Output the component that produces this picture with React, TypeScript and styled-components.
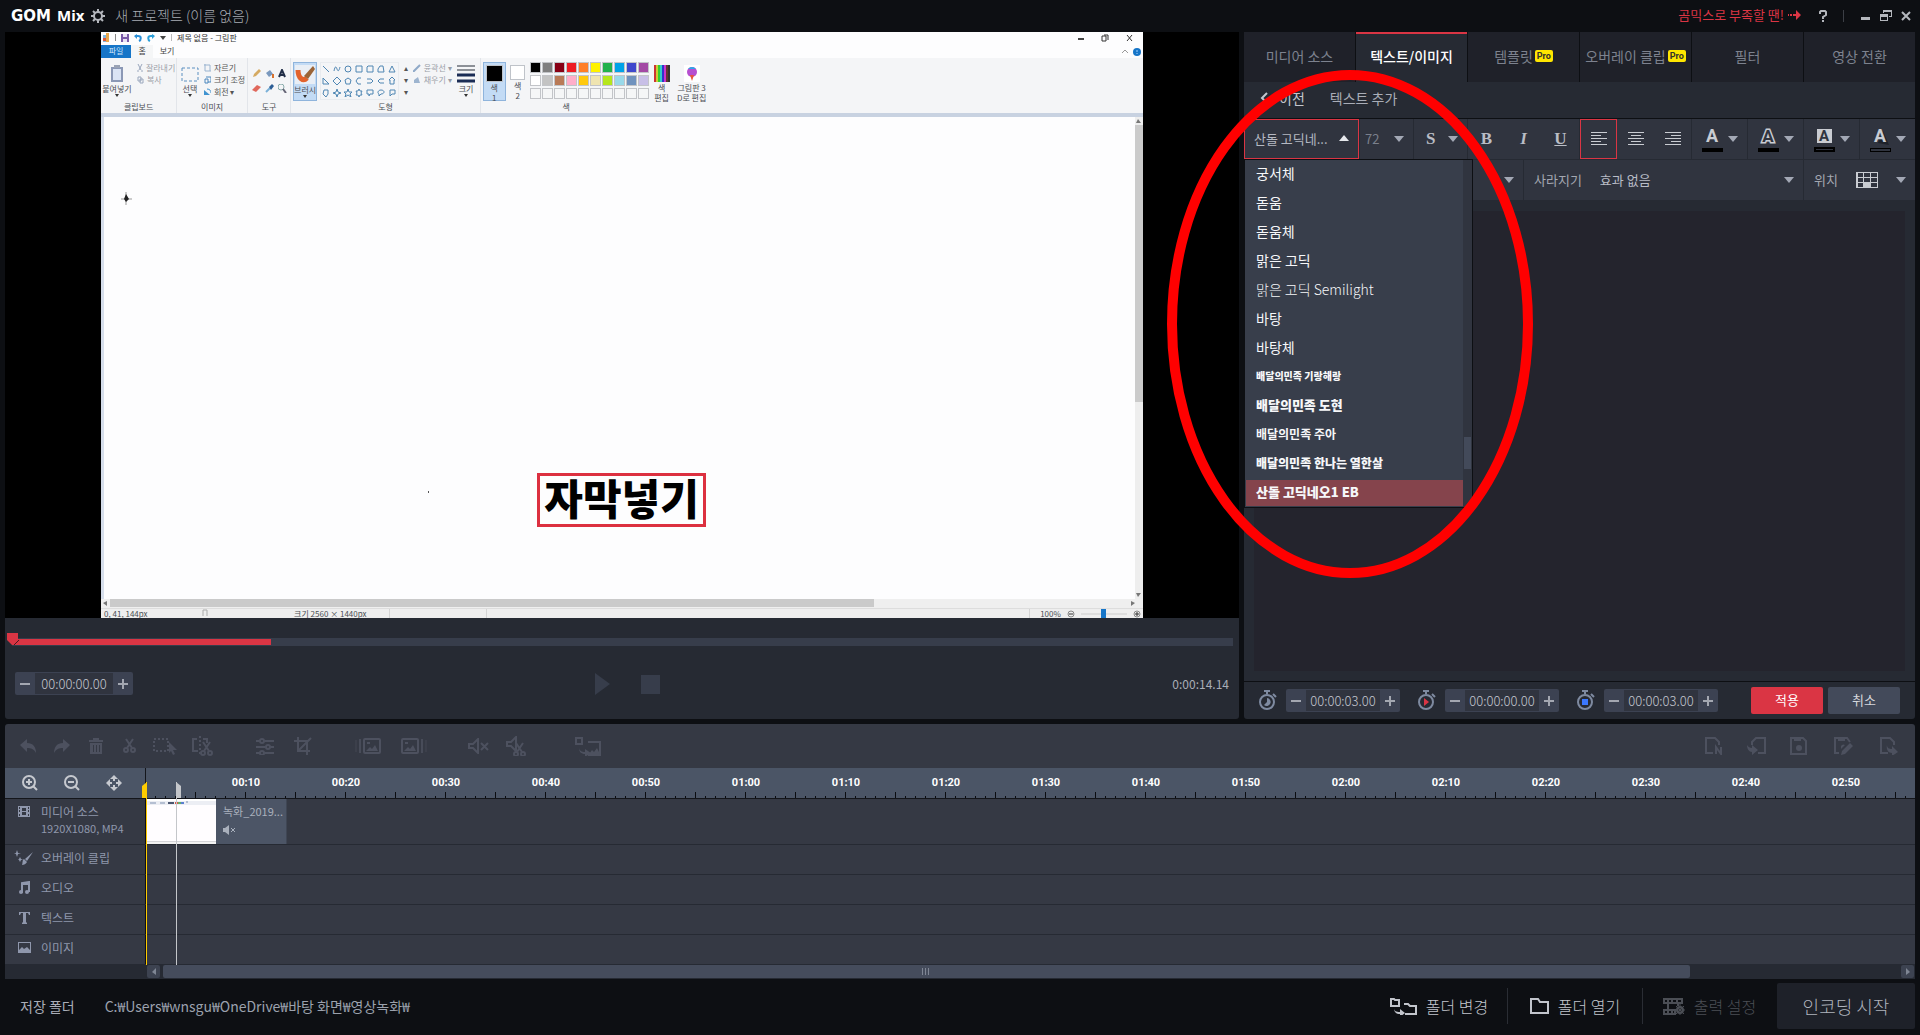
import React from "react";
import styled, { createGlobalStyle } from "styled-components";

const c = {
  base: "#0d0f13",
  panel: "#262a33",
  cell: "#30343f",
  raised: "#3c4252",
  track: "#373d4b",
  red: "#da3544",
  text: "#b9bdc7",
  dim: "#7d828e",
  lane: "#353944",
  ruler: "#4b5566",
  label: "#8f97ac",
};

const Global = createGlobalStyle`
  *, *::before, *::after { box-sizing: border-box; }
  body { margin: 0; background: ${c.base}; }
  body, button, input, select, textarea {
    font-family: "Noto Sans CJK KR", "Noto Sans", sans-serif;
  }
  button { border: 0; padding: 0; background: none; color: inherit; cursor: pointer; }
  svg { display: block; flex: none; }
`;

/* ---------- shared ---------- */

const Ico = ({ w, h, children }: { w: number; h: number; children: React.ReactNode }) => (
  <svg width={w} height={h} viewBox={`0 0 ${w} ${h}`} fill="none" stroke="none" aria-hidden="true">
    {children}
  </svg>
);

const Caret = ({ up }: { up?: boolean }) => (
  <Ico w={10} h={6}>
    <path d={up ? "M0 6L5 0l5 6z" : "M0 0h10L5 6z"} fill={up ? "#e6e8ec" : "#a3a8b5"} />
  </Ico>
);

const Page = styled.div`
  min-height: 100vh;
  display: flex;
  flex-direction: column;
  color: ${c.text};
  background: ${c.base};
`;

/* ---------- title bar ---------- */

const TitleBar = styled.header`
  height: 32px;
  flex: none;
  display: flex;
  align-items: center;
  padding: 0 9px 2px 11px;
`;
const Logo = styled.div`
  display: flex;
  align-items: baseline;
  gap: 6px;
  color: #fff;
  font: 700 15px/20px "DejaVu Sans", sans-serif;
`;
const LogoSub = styled.span`
  font: 700 15px/20px "Noto Sans", sans-serif;
`;
const TitleBtn = styled.button`
  color: #b4b7bd;
  padding-top: 2px;
`;
const ProjectName = styled.h1`
  margin: 0 auto 0 10px;
  font-size: 14px;
  line-height: 20px;
  font-weight: 300;
  color: #a9adb5;
`;
const GearBtn = styled(TitleBtn)`
  margin-left: 7px;
`;
const Promo = styled.a`
  display: flex;
  align-items: center;
  gap: 4px;
  margin-right: 18px;
  font-size: 13px;
  line-height: 20px;
  color: ${c.red};
  text-decoration: none;
`;
const WindowBtns = styled.div`
  display: flex;
  align-items: center;
  gap: 9px;
  margin-left: 17px;
`;
const BarRule = styled.span`
  width: 1px;
  height: 12px;
  margin: 2px 0 0 16px;
  background: #3c3f46;
`;

/* ---------- main ---------- */

const Main = styled.main`
  flex: 1;
  min-height: 0;
  display: grid;
  grid-template-columns: minmax(0, 1234fr) minmax(0, 671fr);
  gap: 5px;
  padding: 0 5px;
`;
const Player = styled.section`
  display: flex;
  flex-direction: column;
  background: ${c.panel};
  border-radius: 0 0 3px 3px;
`;
const Stage = styled.div`
  flex: 1;
  min-height: 0;
  display: flex;
  justify-content: center;
  background: #000;
`;

/* ---------- the recorded frame ---------- */

const Frame = styled.div`
  height: 100%;
  aspect-ratio: 16 / 9;
  display: flex;
  flex-direction: column;
  overflow: hidden;
  position: relative;
  background: #fdfdfe;
  color: #4b4e54;
  font-size: 8px;
  line-height: 12px;
`;
const FTitle = styled.div`
  height: 13px;
  display: flex;
  align-items: center;
  gap: 5px;
  padding: 0 10px 2px 1px;
  color: #333;
`;
const FSpace = styled.span`
  flex: 1;
`;
const FWin = styled.div`
  display: flex;
  align-items: center;
  gap: 17px;
`;
const FTabs = styled.div`
  height: 13px;
  display: flex;
  align-items: center;
  padding-right: 2px;
`;
const FTab = styled.span<{ $kind?: "file" | "on" }>`
  width: ${(p) => (p.$kind === "file" ? 30 : p.$kind === "on" ? 22 : 28)}px;
  height: 13px;
  text-align: center;
  background: ${(p) => (p.$kind === "file" ? "#1675c8" : p.$kind === "on" ? "#f5f6f7" : "none")};
  color: ${(p) => (p.$kind === "file" ? "#cfe5fa" : "#444")};
`;
const Ribbon = styled.div`
  height: 59px;
  flex: none;
  display: flex;
  background: #f4f5f7;
  border-bottom: 4px solid #c8d2e1;
`;
const RGroup = styled.div<{ $w: number; $rule?: boolean }>`
  width: ${(p) => p.$w}px;
  height: 55px;
  display: flex;
  flex-direction: column;
  align-items: center;
  border-right: 1px solid ${(p) => (p.$rule ? "#e2e5ea" : "transparent")};
  white-space: nowrap;
`;
const RBody = styled.div<{ $gap?: number }>`
  flex: 1;
  display: flex;
  gap: ${(p) => p.$gap ?? 8}px;
  padding-top: 4px;
`;
const RBig = styled.div<{ $on?: boolean; $w?: number }>`
  width: ${(p) => p.$w ?? 24}px;
  height: 39px;
  padding-top: 2px;
  display: flex;
  flex-direction: column;
  align-items: center;
  line-height: 9px;
  gap: 1px;
  background: ${(p) => (p.$on ? "#c3dbf5" : "none")};
  border: 1px solid ${(p) => (p.$on ? "#8fb4dc" : "transparent")};
`;
const RStack = styled.div<{ $faint?: boolean }>`
  display: flex;
  flex-direction: column;
  color: ${(p) => (p.$faint ? "#9a9ea7" : "#555")};
`;
const RLine = styled.span`
  display: flex;
  align-items: center;
  gap: 3px;
  height: 12px;
`;
const Tools = styled.div`
  display: grid;
  grid-template-columns: repeat(3, 13px);
  grid-auto-rows: 15px;
  place-items: center;
  padding-top: 4px;
`;
const Shapes = styled.div`
  display: grid;
  grid-template-columns: repeat(7, 11px);
  grid-auto-rows: 12px;
  place-items: center;
  border: 1px solid #e8ebef;
  height: 38px;
`;
const Palette = styled.div`
  display: grid;
  grid-template-columns: repeat(10, 12px);
  grid-auto-rows: 13px;
`;
const Swatch = styled.i<{ $c: string }>`
  width: 11px;
  height: 11px;
  background: ${(p) => p.$c};
  border: 1px solid #c2c4c8;
`;
const Chip = styled.i<{ $c: string; $s: number }>`
  flex: none;
  width: ${(p) => p.$s}px;
  height: ${(p) => p.$s}px;
  background: ${(p) => p.$c};
  border: 1px solid #bfc3c9;
`;
const FCanvas = styled.div`
  flex: 1;
  display: flex;
  border-left: 3px solid #d6deeb;
`;
const FPaper = styled.div`
  flex: 1;
`;
const FScrollV = styled.div`
  width: 8px;
  display: flex;
  flex-direction: column;
  align-items: center;
  gap: 2px;
  background: #eee;
  padding: 2px 0;
`;
const FThumbV = styled.div`
  width: 8px;
  height: 58%;
  margin-bottom: auto;
  background: #cbcbcb;
`;
const FScrollH = styled.div`
  height: 9px;
  display: flex;
  align-items: center;
  gap: 3px;
  background: #efefef;
  padding: 0 8px 1px 2px;
`;
const FThumbH = styled.div`
  width: 74%;
  height: 8px;
  margin-right: auto;
  background: #cacaca;
`;
const FStatus = styled.div`
  height: 10px;
  flex: none;
  display: flex;
  align-items: center;
  background: #eee;
  border-top: 1px solid #ddd;
  line-height: 9px;
  padding-left: 3px;
`;
const FCell = styled.span<{ $w: number; $rule?: boolean }>`
  width: ${(p) => p.$w}px;
  border-right: 1px solid ${(p) => (p.$rule ? "#d4d4d4" : "transparent")};
  height: 9px;
  white-space: nowrap;
`;
const Zoom = styled.span`
  display: flex;
  align-items: center;
  gap: 6px;
  padding: 0 2px 0 10px;
  border-left: 1px solid #d4d4d4;
`;
const Pointer = styled.div`
  position: absolute;
  left: 20px;
  top: 160px;
`;
const Speck = styled.i`
  position: absolute;
  left: 327px;
  top: 459px;
  width: 1px;
  height: 2px;
  background: #555;
`;
const Caption = styled.div`
  position: absolute;
  left: 436px;
  bottom: 91px;
  width: 169px;
  height: 54px;
  border: 3px solid #dc3040;
  color: #000;
  font-size: 42px;
  line-height: 42px;
  font-weight: 900;
  text-align: center;
  white-space: nowrap;
`;

const shapeIcons = [
  "M1 1l6 6", "M1 6c1-5 2-5 3-2s2 2 3-2", "M4 1a3 3 0 100 6 3 3 0 100-6", "M1 1h6v6H1z", "M2 1h4v0h1v6H1V2z", "M1 7V4l2-3h3l1 6z", "M4 1l3 6H1z",
  "M1 1l6 6H1z", "M4 0l4 4-4 4-4-4z", "M4 1l3 2-1 4H2L1 3z", "M6 1H3L1 4l2 3h3", "M1 2h4l2 2-2 2H1", "M7 2H3L1 4l2 2h4", "M4 0l3 3H6v4H2V3H1z",
  "M2 1h4v4L4 8 1 5z", "M4 0l1 3 3 1-3 1-1 3-1-3-3-1 3-1z", "M4 0l1 3h3L6 5l1 3-3-2-3 2 1-3-2-2h3z", "M4 0l1 2h2L6 4l1 2H5L4 8 3 6H1l1-2-1-2h2z", "M1 1h6v4H4L3 7V5H1z", "M4 1c4 0 4 4 0 4L2 7V5C0 4 1 1 4 1z", "M2 1h5v4H4L2 7z",
];
const swatches = [
  "#000", "#7f7f7f", "#880015", "#ed1c24", "#ff7f27", "#fff200", "#22b14c", "#00a2e8", "#3f48cc", "#a349a4",
  "#fff", "#c3c3c3", "#b97a57", "#ffaec9", "#ffc90e", "#efe4b0", "#b5e61d", "#99d9ea", "#7092be", "#c8bfe7",
  ...Array(10).fill("#f5f6f7"),
];

const RecordedFrame = () => (
  <Frame>
    <FTitle>
      <Ico w={8} h={10}>
        <path d="M1 2h4v7H1z" fill="#7fb6e0" />
        <path d="M4 0h3v9H4z" fill="#e8a94e" />
        <path d="M1 5h3v3H1z" fill="#d9583c" />
      </Ico>
      <Ico w={1} h={7}><path d="M0 0h1v7H0z" fill="#888" /></Ico>
      <Ico w={8} h={8}><path d="M0 0h8v8H0z" fill="#7a5ba8" /><path d="M2 0h4v3H2zM2 5h4v3H2z" fill="#e9e2f4" /></Ico>
      <Ico w={8} h={8}><path d="M1 2h3c4 0 3 4 1 5" stroke="#2b8fd8" strokeWidth="2" /><path d="M3 0v5L0 2z" fill="#2b8fd8" /></Ico>
      <Ico w={8} h={8}><path d="M7 2H4C0 2 1 6 3 7" stroke="#2b9fd8" strokeWidth="2" /><path d="M5 0v5l3-3z" fill="#2b9fd8" /></Ico>
      <Ico w={6} h={4}><path d="M0 0h6L3 4z" fill="#444" /></Ico>
      <Ico w={1} h={7}><path d="M0 0h1v7H0z" fill="#bbb" /></Ico>
      제목 없음 - 그림판
      <FSpace />
      <FWin>
        <Ico w={6} h={8}><path d="M0 4h6v2H0z" fill="#444" /></Ico>
        <Ico w={8} h={8}><path d="M1 2h4v5H1zM3 1h4v5" stroke="#333" /></Ico>
        <Ico w={7} h={8}><path d="M1 1l5 6M6 1L1 7" stroke="#333" /></Ico>
      </FWin>
    </FTitle>
    <FTabs>
      <FTab $kind="file">파일</FTab>
      <FTab $kind="on">홈</FTab>
      <FTab>보기</FTab>
      <FSpace />
      <Ico w={12} h={8}><path d="M1 5l3-3 3 3" stroke="#999" /></Ico>
      <Ico w={8} h={8}><circle cx="4" cy="4" r="4" fill="#1675c8" /><path d="M4 2v2M4 5v1" stroke="#9fd0ff" /></Ico>
    </FTabs>
    <Ribbon>
      <RGroup $w={76} $rule>
        <RBody $gap={5}>
          <RBig $w={30}>
            <Ico w={14} h={18}><path d="M1 2h12v15H1z" fill="#8b98b5" /><path d="M3 4h8v11H3z" fill="#dbe4f4" /><path d="M4 0h6v3H4z" fill="#9aa3b5" /></Ico>
            붙여넣기<Ico w={4} h={3}><path d="M0 0h4L2 3z" fill="#333" /></Ico>
          </RBig>
          <RStack $faint>
            <RLine><Ico w={6} h={8}><path d="M1 0l3 6M5 0L2 6M0 7h2M4 7h2" stroke="#9aa7bd" /></Ico>잘라내기</RLine>
            <RLine><Ico w={7} h={8}><path d="M1 1h3v4H1zM3 3h3v4H3z" stroke="#9aa7bd" /></Ico>복사</RLine>
          </RStack>
        </RBody>
        클립보드
      </RGroup>
      <RGroup $w={71} $rule>
        <RBody $gap={3}>
          <RBig $w={22}>
            <Ico w={18} h={18}><path d="M1 3h16v13H1z" stroke="#5b8fc0" strokeDasharray="3 2" /></Ico>
            선택<Ico w={4} h={3}><path d="M0 0h4L2 3z" fill="#333" /></Ico>
          </RBig>
          <RStack>
            <RLine><Ico w={7} h={8}><path d="M1 0v7h6M0 1h6v6" stroke="#9ab4d0" /></Ico>자르기</RLine>
            <RLine><Ico w={7} h={8}><path d="M1 3h3v4H1zM2 1h5v5H4" stroke="#4a86bd" /></Ico>크기 조정</RLine>
            <RLine><Ico w={7} h={8}><path d="M0 7l6 0-6-5z" fill="#3f93d0" /><path d="M3 1c3 0 4 2 4 4" stroke="#3f93d0" /></Ico>회전 ▾</RLine>
          </RStack>
        </RBody>
        이미지
      </RGroup>
      <RGroup $w={43} $rule>
        <RBody>
          <Tools>
            <Ico w={9} h={9}><path d="M1 8l1-3 5-5 2 2-5 5z" fill="#d5aa62" /></Ico>
            <Ico w={9} h={9}><path d="M1 4l4-3 3 4-4 3z" fill="#7a98bd" /><path d="M7 5h2v4H7z" fill="#d8722f" /></Ico>
            <Ico w={8} h={9}><path d="M1 8l3-7 3 7M2 6h4" stroke="#222f48" strokeWidth="2" /></Ico>
            <Ico w={9} h={9}><path d="M0 6l5-5 4 2-5 5z" fill="#e0685c" /></Ico>
            <Ico w={9} h={9}><path d="M1 8l4-4" stroke="#7ab0d8" strokeWidth="2" /><path d="M4 3l3-3 2 2-3 4z" fill="#2b5d95" /></Ico>
            <Ico w={9} h={9}><circle cx="3" cy="3" r="3" stroke="#8aa" /><path d="M5 5l3 4" stroke="#667" strokeWidth="2" /></Ico>
          </Tools>
        </RBody>
        도구
      </RGroup>
      <RGroup $w={29}>
        <RBody>
          <RBig $on>
            <Ico w={22} h={19}><path d="M1 0h20v19H1z" fill="#e9eef5" /><path d="M4 5c0 8 5 12 9 8" stroke="#e2622c" strokeWidth="5" /><path d="M10 11l9-10 2 3-7 10z" fill="#9b6437" /></Ico>
            브러시<Ico w={4} h={3}><path d="M0 0h4L2 3z" fill="#333" /></Ico>
          </RBig>
        </RBody>
      </RGroup>
      <RGroup $w={132}>
        <RBody $gap={5}>
          <Shapes>
            {shapeIcons.map((d) => <Ico key={d} w={8} h={8}><path d={d} stroke="#4f86b3" /></Ico>)}
          </Shapes>
          <RStack><RLine>▴</RLine><RLine>▾</RLine><RLine>▾</RLine></RStack>
          <RStack $faint>
            <RLine><Ico w={8} h={8}><path d="M0 8l7-7" stroke="#8fa9c8" strokeWidth="2" /></Ico>윤곽선 ▾</RLine>
            <RLine><Ico w={8} h={8}><path d="M1 4l4-3 2 6H1z" fill="#9db4cf" /></Ico>채우기 ▾</RLine>
          </RStack>
        </RBody>
        도형
      </RGroup>
      <RGroup $w={29} $rule>
        <RBody>
          <RBig>
            <Ico w={18} h={18}><path d="M0 1h18M0 5h18" stroke="#8c9097" strokeWidth="2" /><path d="M0 10h18M0 16h18" stroke="#1a2c55" strokeWidth="3" /></Ico>
            크기<Ico w={4} h={3}><path d="M0 0h4L2 3z" fill="#333" /></Ico>
          </RBig>
        </RBody>
      </RGroup>
      <RGroup $w={171}>
        <RBody $gap={2}>
          <RBig $on $w={23}><Chip $c="#000" $s={17} />색<span>1</span></RBig>
          <RBig $w={20}><Chip $c="#fff" $s={15} />색<span>2</span></RBig>
          <Palette>{swatches.map((s, i) => <Swatch key={i} $c={s} />)}</Palette>
        </RBody>
        색
      </RGroup>
      <RGroup $w={56}>
        <RBody $gap={8}>
          <RBig $w={16}>
            <Ico w={16} h={17}>
              {["#c33", "#cc3", "#3c3", "#3cc", "#33c", "#c3c", "#633", "#333"].map((fill, i) => <path key={fill} d={`M${i * 2} 0h2v17h-2z`} fill={fill} />)}
            </Ico>
            색<span>편집</span>
          </RBig>
          <RBig $w={28}>
            <Ico w={16} h={17}><path d="M0 0h16v17H0z" fill="#fff" /><circle cx="8" cy="7" r="5" fill="#b64fd0" /><path d="M4 4a5 5 0 018 0z" fill="#2ba8e8" /><path d="M6 10h4l-2 6z" fill="#e8553c" /></Ico>
            그림판 3<span>D로 편집</span>
          </RBig>
        </RBody>
      </RGroup>
    </Ribbon>
    <FCanvas>
      <FPaper />
      <FScrollV>
        <Ico w={5} h={4}><path d="M0 4l2-4 3 4z" fill="#777" /></Ico>
        <FThumbV />
        <Ico w={5} h={4}><path d="M0 0h5L2 4z" fill="#777" /></Ico>
      </FScrollV>
    </FCanvas>
    <FScrollH>
      <Ico w={4} h={5}><path d="M4 0L0 2l4 3z" fill="#777" /></Ico>
      <FThumbH />
      <Ico w={4} h={5}><path d="M0 0l4 2-4 3z" fill="#777" /></Ico>
    </FScrollH>
    <FStatus>
      <FCell $w={98}>0, 41, 144px</FCell>
      <FCell $w={92}><Ico w={6} h={7}><path d="M1 7V1h4v6" stroke="#aaa" /></Ico></FCell>
      <FCell $w={96} $rule>크기 2560 × 1440px</FCell>
      <FCell $w={97} $rule />
      <FSpace />
      <Zoom>
        100%
        <Ico w={8} h={8}><circle cx="4" cy="4" r="3" stroke="#888" /><path d="M2 4h4" stroke="#333" /></Ico>
        <Ico w={46} h={9}><path d="M0 4h46v2H0z" fill="#ddd" /><path d="M20 0h5v9h-5z" fill="#1675c8" /></Ico>
        <Ico w={8} h={8}><circle cx="4" cy="4" r="3" stroke="#888" /><path d="M2 4h4M4 2v4" stroke="#333" /></Ico>
      </Zoom>
    </FStatus>
    <Pointer>
      <Ico w={11} h={13}><path d="M0 7h11M5 0v13" stroke="#999" /><path d="M5 2l3 5-3 3-2-3z" fill="#222" /></Ico>
    </Pointer>
    <Speck />
    <Caption>자막넣기</Caption>
  </Frame>
);

/* ---------- player controls ---------- */

const Controls = styled.div`
  height: 101px;
  flex: none;
  padding: 15px 6px 0 2px;
`;
const Seek = styled.div`
  display: flex;
  align-items: flex-end;
  height: 13px;
`;
const SeekTrack = styled.div`
  flex: 1;
  height: 8px;
  margin-left: -8px;
  background: ${c.track};
  padding: 1px 0;
`;
const SeekFill = styled.div`
  width: 21.2%;
  height: 6px;
  background: ${c.red};
`;
const SeekHead = styled.span`
  height: 13px;
  z-index: 1;
`;
const Transport = styled.div`
  display: grid;
  grid-template-columns: 1fr auto 1fr;
  align-items: center;
  margin-top: 26px;
  padding: 0 4px 0 8px;
`;
const PlayBtns = styled.div`
  display: flex;
  gap: 31px;
`;
const Total = styled.output`
  justify-self: end;
  font-size: 12px;
  line-height: 16px;
  color: #a9adb7;
`;

const Spin = styled.div<{ $wide?: boolean }>`
  display: flex;
  width: ${(p) => (p.$wide ? 118 : 114)}px;
  height: 23px;
  padding: 1px 0;
  border-radius: 2px;
  background: ${c.raised};
`;
const SpinBtn = styled.button`
  width: 20px;
  flex: none;
  display: grid;
  place-items: center;
  color: #a3a7b1;
`;
const SpinInput = styled.input`
  flex: 1;
  min-width: 0;
  border: 0;
  padding: 0;
  background: ${c.cell};
  color: #c3c6ce;
  font-size: 13px;
  font-weight: 300;
  text-align: center;
`;
const TimeSpinner = ({ label, value, wide }: { label: string; value: string; wide?: boolean }) => (
  <Spin $wide={wide}>
    <SpinBtn aria-label={`${label} 감소`}><Ico w={10} h={10}><path d="M0 4h10v2H0z" fill="currentColor" /></Ico></SpinBtn>
    <SpinInput aria-label={label} defaultValue={value} />
    <SpinBtn aria-label={`${label} 증가`}><Ico w={10} h={10}><path d="M0 4h10v2H0zM4 0h2v10H4z" fill="currentColor" /></Ico></SpinBtn>
  </Spin>
);

/* ---------- editor panel ---------- */

const Editor = styled.section`
  position: relative;
  display: flex;
  flex-direction: column;
  background: ${c.panel};
  border-radius: 0 0 3px 3px;
`;
const Tabs = styled.nav`
  display: grid;
  grid-template-columns: repeat(6, 1fr);
  column-gap: 1px;
  height: 50px;
  background: ${c.base};
`;
const Tab = styled.button<{ $on?: boolean }>`
  display: flex;
  align-items: center;
  justify-content: center;
  gap: 2px;
  padding-bottom: 4px;
  font-size: 14px;
  white-space: nowrap;
  border-top: 2px solid ${(p) => (p.$on ? c.red : "#1f2129")};
  background: ${(p) => (p.$on ? c.panel : "#1f2129")};
  color: ${(p) => (p.$on ? "#fff" : c.dim)};
  font-weight: ${(p) => (p.$on ? 500 : 400)};
`;
const Pro = styled.span`
  padding: 0 2px;
  border-radius: 2px;
  background: #ffe600;
  color: #33322a;
  font: 700 9px/12px Roboto, sans-serif;
`;
const Crumbs = styled.div`
  display: flex;
  align-items: center;
  gap: 25px;
  height: 37px;
  padding: 0 16px 4px;
  border-bottom: 1px solid ${c.base};
  font-size: 14px;
  color: #a9adb7;
`;
const Back = styled.button`
  display: flex;
  align-items: center;
  gap: 11px;
  font-size: 14px;
  color: #c3c6ce;
`;
const ToolRow = styled.div<{ $cols: string }>`
  display: grid;
  grid-template-columns: ${(p) => p.$cols};
  column-gap: 1px;
  height: 41px;
  padding-bottom: 1px;
  font-size: 13px;
`;
const Cell = styled.div`
  display: flex;
  align-items: center;
  background: ${c.cell};
  min-width: 0;
`;
const Trio = styled(Cell)`
  display: grid;
  grid-template-columns: repeat(3, 1fr);
  align-items: stretch;
`;
const FontBtn = styled.button`
  display: flex;
  align-items: center;
  justify-content: space-between;
  padding: 0 9px 2px;
  border: 1px solid ${c.red};
  background: ${c.cell};
  font-size: 13px;
  color: #b5b9c2;
`;
const Pick = styled.select`
  appearance: none;
  flex: 1;
  min-width: 0;
  height: 40px;
  border: 0;
  padding: 0 0 2px 5px;
  background: none;
  color: ${c.text};
  font-size: 13px;
`;
const SizePick = styled(Pick)`
  color: #7b808c;
`;
const PickCell = styled(Cell)`
  padding-right: 9px;
`;
const PickLabel = styled.label`
  padding: 0 0 2px 10px;
  margin-right: 13px;
  color: #a3a7b1;
`;
const Glyph = styled.button<{ $on?: boolean; $italic?: boolean; $under?: boolean }>`
  display: grid;
  place-items: center;
  border: 1px solid ${(p) => (p.$on ? c.red : "transparent")};
  color: #babdc5;
  font: ${(p) => (p.$italic ? "italic" : "normal")} 700 17px/20px "Liberation Serif", serif;
  text-decoration: ${(p) => (p.$under ? "underline" : "none")};
`;
const Split = styled.button`
  width: 100%;
  height: 100%;
  display: flex;
  align-items: center;
  justify-content: space-between;
  padding: 0 9px 0 10px;
  background: ${c.cell};
`;
const StyleMark = styled.span`
  color: #babdc5;
  font: 700 17px/20px "Liberation Serif", serif;
  padding-left: 2px;
`;
const FxSplit = styled(Split)`
  justify-content: flex-end;
`;
const PosSplit = styled(Split)`
  font-size: 13px;
  color: #a3a7b1;
`;
const PosLabel = styled.span`
  padding-bottom: 2px;
`;
const Pad = styled.div`
  flex: 1;
  display: flex;
  padding: 10px;
`;
const TextBox = styled.textarea`
  flex: 1;
  resize: none;
  border: 0;
  background: #24242d;
  color: #fff;
`;
const Timing = styled.div`
  display: flex;
  align-items: center;
  gap: 17px;
  height: 38px;
  padding: 0 15px 0 14px;
  border-top: 1px solid ${c.base};
`;
const Timer = styled.div`
  display: flex;
  align-items: center;
  gap: 8px;
`;
const Actions = styled.div`
  display: flex;
  gap: 5px;
  margin-left: auto;
`;
const ActBtn = styled.button<{ $main?: boolean }>`
  width: 72px;
  height: 27px;
  padding-bottom: 2px;
  border-radius: 2px;
  background: ${(p) => (p.$main ? c.red : "#434a5a")};
  color: ${(p) => (p.$main ? "#fff" : "#d5d7dc")};
  font-size: 13px;
`;
const Menu = styled.div`
  position: absolute;
  top: 127px;
  left: 0;
  width: 229px;
  height: 349px;
  display: flex;
  border: 1px solid ${c.base};
  background: #383e4b;
  overflow: hidden;
`;
const Options = styled.ul`
  flex: 1;
  margin: 0;
  padding: 1px 0 0 1px;
  list-style: none;
  display: flex;
  flex-direction: column;
  gap: 3px;
`;
const Option = styled.li<{ $size: number; $weight: number; $on?: boolean }>`
  height: 26px;
  flex: none;
  padding-left: 10px;
  color: #f6f7f9;
  font-size: ${(p) => p.$size}px;
  line-height: 24px;
  font-weight: ${(p) => p.$weight};
  background: ${(p) => (p.$on ? "#85444c" : "none")};
`;
const MenuBar = styled.div`
  width: 9px;
  padding: 277px 1px 0;
  background: #30343f;
`;
const MenuThumb = styled.div`
  height: 32px;
  background: #434a5a;
`;
const Highlight = styled.div`
  position: absolute;
  left: -77px;
  top: 37px;
  pointer-events: none;
`;

const fonts: [string, number, number][] = [
  ["궁서체", 14, 400],
  ["돋움", 14, 400],
  ["돋움체", 14, 400],
  ["맑은 고딕", 14, 400],
  ["맑은 고딕 Semilight", 14, 300],
  ["바탕", 14, 400],
  ["바탕체", 14, 400],
  ["배달의민족 기랑해랑", 10, 900],
  ["배달의민족 도현", 13, 900],
  ["배달의민족 주아", 12, 700],
  ["배달의민족 한나는 열한살", 12, 900],
  ["산돌 고딕네오1 EB", 13, 900],
];

const AlignIcon = ({ short }: { short: number }) => (
  <Ico w={16} h={14}>
    {[0, 1, 2, 3, 4].map((i) => (
      <path key={i} d={i % 2 ? `M${short} ${i * 3}h10v1h-10z` : `M0 ${i * 3}h16v1H0z`} fill="#c9ccd2" />
    ))}
  </Ico>
);

const Stopwatch = ({ children }: { children: React.ReactNode }) => (
  <Ico w={20} h={21}>
    <path d="M6 1h6M9 1v3M15 4l3 3" stroke="#7e8aa0" strokeWidth="2" />
    <circle cx="9" cy="12" r="7" stroke="#7e8aa0" strokeWidth="2" />
    {children}
  </Ico>
);

const letter = { textAnchor: "middle", fontFamily: "Roboto", fontWeight: 700 } as const;
const colorMarks = [
  <Ico key="a" w={21} h={32}>
    <text {...letter} x="10" y="19" fontSize="18" fill="#c9ccd2">A</text>
    <path d="M0 25h21v4H0z" fill="#000" />
  </Ico>,
  <Ico key="b" w={21} h={32}>
    <text {...letter} x="10" y="19" fontSize="17" fill="#30343f" stroke="#c9ccd2" strokeWidth="3" paintOrder="stroke">A</text>
    <path d="M0 25h21v4H0z" fill="#000" />
  </Ico>,
  <Ico key="c" w={21} h={32}>
    <path d="M3 6h15v14H3z" fill="#c9ccd2" />
    <text {...letter} x="10" y="18" fontSize="15" fill="#30343f">A</text>
    <path d="M0 24h21v5H0zM2 26v1h17v-1z" fill="#000" fillRule="evenodd" />
  </Ico>,
  <Ico key="d" w={21} h={32}>
    <path d="M8 20l5-12 6 14z" fill="#1f222a" />
    <text {...letter} x="10" y="19" fontSize="18" fill="#c9ccd2">A</text>
    <path d="M0 25h21v4H0zM1 26v2h19v-2z" fill="#000" fillRule="evenodd" />
  </Ico>,
];

/* ---------- timeline ---------- */

const Timeline = styled.section`
  flex: none;
  margin: 5px 5px 0;
  border-radius: 3px 3px 0 0;
  overflow: hidden;
  background: ${c.lane};
`;
const EditBar = styled.div`
  display: flex;
  justify-content: space-between;
  height: 44px;
  padding: 0 4px 0 6px;
  color: #4d515f;
`;
const EditSide = styled.div`
  display: flex;
  gap: 24px;
`;
const EditGroup = styled.div`
  display: flex;
`;
const EditBtn = styled.button<{ $w: number }>`
  width: ${(p) => p.$w}px;
  display: grid;
  place-items: center;
`;
const Lanes = styled.div`
  position: relative;
`;
const RulerRow = styled.div`
  display: grid;
  grid-template-columns: 141px minmax(0, 1fr);
  height: 31px;
  background: ${c.ruler};
  border-bottom: 1px solid #14161b;
`;
const ZoomBtns = styled.div`
  display: flex;
  align-items: center;
  gap: 26px;
  padding-left: 17px;
  border-right: 1px solid #14161b;
  color: #c6c9cf;
`;
const Ruler = styled.div`
  display: flex;
  overflow: hidden;
  padding-left: 50px;
  background:
    repeating-linear-gradient(to right, transparent 0 9px, #0b0c10 9px 10px) left bottom / 100% 2px no-repeat,
    repeating-linear-gradient(to right, transparent 0 49px, #0b0c10 49px 50px) left bottom / 100% 6px no-repeat;
`;
const Mark = styled.span`
  flex: none;
  width: 100px;
  padding-top: 7px;
  text-align: center;
  color: #fff;
  font: 700 11px/16px Roboto, sans-serif;
`;
const Lane = styled.div<{ $tall?: boolean }>`
  display: grid;
  grid-template-columns: 141px minmax(0, 1fr);
  height: ${(p) => (p.$tall ? 46 : 30)}px;
  border-bottom: 1px solid ${c.panel};
`;
const LaneHead = styled.div`
  display: grid;
  grid-template-columns: 20px 1fr;
  column-gap: 7px;
  align-items: center;
  align-content: center;
  justify-items: center;
  padding: 0 0 4px 9px;
  border-right: 1px solid ${c.base};
  color: ${c.label};
  font-size: 12px;
  line-height: 16px;
`;
const LaneName = styled.span`
  justify-self: start;
`;
const LaneInfo = styled.span`
  grid-column: 2;
  justify-self: start;
  font-size: 11px;
`;
const Clip = styled.div`
  width: 141px;
  display: flex;
  background: #4c5566;
  border-right: 1px solid #3f4654;
`;
const Thumb = styled.div`
  width: 70px;
  background: linear-gradient(#fff 0 2px, #eceef4 2px 6px, #fffdff 6px 42px, #d5d5d8 42px 43px, #f2f2f2 43px);
`;
const ClipText = styled.div`
  display: flex;
  flex-direction: column;
  gap: 5px;
  padding: 3px 0 0 7px;
  color: #a9b0bc;
  font-size: 11px;
  line-height: 18px;
`;
const Marker = styled.div<{ $x: number; $color: string; $line: number }>`
  position: absolute;
  top: 14px;
  bottom: 14px;
  left: ${(p) => p.$x}px;
  color: ${(p) => p.$color};
  background: linear-gradient(${(p) => p.$color}, ${(p) => p.$color}) ${(p) => p.$line}px 0 / 1px 100% no-repeat;
`;
const HScroll = styled.div`
  display: flex;
  height: 14px;
  padding: 0 1px 1px 142px;
  background: ${c.panel};
`;
const HBtn = styled.button`
  width: 13px;
  display: grid;
  place-items: center;
  border-radius: 2px;
  background: #3d4351;
  color: #7f8694;
`;
const HTrack = styled.div`
  flex: 1;
  padding: 0 3px;
`;
const HThumb = styled.div`
  width: 88%;
  height: 13px;
  display: grid;
  place-items: center;
  border-radius: 2px;
  background: #454c5c;
`;

/* ---------- footer ---------- */

const Footer = styled.footer`
  flex: none;
  display: flex;
  align-items: center;
  height: 56px;
  padding: 0 5px 2px 20px;
  font-size: 14px;
  color: #a9adb7;
`;
const SavePath = styled.span`
  margin: 0 auto 0 30px;
  color: #9ba1ad;
`;
const FootBtn = styled.button<{ $w: number; $last?: boolean }>`
  width: ${(p) => p.$w}px;
  height: 36px;
  display: flex;
  align-items: center;
  justify-content: center;
  gap: 9px;
  font-size: 16px;
  font-weight: 300;
  color: #c2c5cc;
  border-right: 1px solid ${(p) => (p.$last ? "transparent" : "#2a2d34")};
  &:disabled { color: #4b4e55; }
`;
const Encode = styled.button`
  width: 138px;
  height: 46px;
  border-radius: 2px;
  background: #1e2129;
  color: #b0b4bd;
  font-size: 18px;
  font-weight: 300;
`;

const marks = Array.from({ length: 17 }, (_, i) => {
  const s = (i + 1) * 10;
  return `${String(Math.floor(s / 60)).padStart(2, "0")}:${String(s % 60).padStart(2, "0")}`;
});

const f = { fill: "currentColor" };
const s2 = { stroke: "currentColor", strokeWidth: 2 };

const Scissor = ({ x = 0, y = 0 }: { x?: number; y?: number }) => (
  <g transform={`translate(${x} ${y})`}>
    <path d="M2 0l6 9M9 0L3 9" {...s2} />
    <circle cx="2" cy="11" r="2" {...s2} />
    <circle cx="9" cy="11" r="2" {...s2} />
  </g>
);
const Speaker = () => <path d="M1 6h4l5-5v14l-5-5H1z" {...s2} />;
const Landscape = ({ x }: { x: number }) => (
  <g transform={`translate(${x} 0)`}>
    <rect x="1" y="1" width="16" height="14" rx="1" {...s2} />
    <path d="M3 13l4-4 2 2 3-4 3 6z" {...f} />
    <path d="M4 4h3v2H4z" {...f} />
  </g>
);
const DocPath = "M8 16H1V1h9l4 4v3";

const leftTools: [string, number, React.ReactNode][][] = [
  [
    ["실행 취소", 34, <Ico w={16} h={14}><path d="M0 6l7-6v4c6 0 9 4 9 10-2-4-5-5-9-5v4z" {...f} /></Ico>],
    ["다시 실행", 34, <Ico w={16} h={14}><path d="M16 6L9 0v4C3 4 0 8 0 14c2-4 5-5 9-5v4z" {...f} /></Ico>],
    ["삭제", 34, <Ico w={14} h={16}><path d="M0 2h4V0h6v2h4v2H0zM1 5h12v11H1zm3 2v7h1V7zm3 0v7h1V7zm3 0v7h1V7z" fillRule="evenodd" {...f} /></Ico>],
    ["자르기", 34, <Ico w={14} h={16}><Scissor x={1} y={1} /></Ico>],
    ["구간 선택", 36, <Ico w={24} h={18}><path d="M1 2h14v12H1z" {...s2} strokeDasharray="2 2" /><path d="M16 5l8 8h-4l2 4-2 1-2-4-2 2z" {...f} /></Ico>],
    ["구간 자르기", 38, <Ico w={21} h={20}><path d="M5 3H1v12h5M11 3h4v4" {...s2} /><path d="M8 0v18" {...s2} strokeDasharray="2 2" /><Scissor x={9} y={6} /></Ico>],
  ],
  [
    ["조정", 40, <Ico w={18} h={17}><path d="M0 3h18M0 9h18M0 15h18" {...s2} /><g {...s2} fill={c.lane}><circle cx="6" cy="3" r="2" /><circle cx="12" cy="9" r="2" /><circle cx="6" cy="15" r="2" /></g></Ico>],
    ["화면 자르기", 36, <Ico w={18} h={18}><path d="M4 0v14h12M0 4h13v14M4 14L17 1" {...s2} /></Ico>],
  ],
  [
    ["페이드 인", 46, <Ico w={26} h={16}><path d="M1 2v12" stroke="currentColor" opacity=".6" /><path d="M5 1v14" stroke="currentColor" strokeWidth="2" opacity=".8" /><Landscape x={8} /></Ico>],
    ["페이드 아웃", 46, <Ico w={26} h={16}><Landscape x={0} /><path d="M21 1v14" stroke="currentColor" strokeWidth="2" opacity=".8" /><path d="M25 2v12" stroke="currentColor" opacity=".6" /></Ico>],
  ],
  [
    ["음소거", 34, <Ico w={21} h={16}><Speaker /><path d="M13 5l7 7M20 5l-7 7" {...s2} /></Ico>],
    ["음성 분리", 42, <Ico w={20} h={20}><Speaker /><Scissor x={8} y={7} /></Ico>],
  ],
  [["클립 교체", 54, <Ico w={27} h={19}><path d="M1 1h6v6H1zM13 5h12v13H13" {...s2} /><path d="M4 10c0 4 3 5 6 5v-3l6 4-6 4v-3c-4 0-6-2-6-7zM14 17l3-4 2 2 3-4 3 6z" {...f} /></Ico>]],
];
const rightTools: [string, number, React.ReactNode][] = [
  ["새 프로젝트", 42, <Ico w={18} h={18}><path d={DocPath} {...s2} /><path d="M11 17v-7l5 7v-7" {...s2} /></Ico>],
  ["불러오기", 42, <Ico w={19} h={18}><path d="M5 8V5l4-4h9v15h-7" {...s2} /><path d="M0 8c1 2 3 3 5 3V8l6 5-6 5v-3c-3 0-5-3-5-7z" {...f} /></Ico>],
  ["저장", 44, <Ico w={18} h={18}><path d="M1 1h12l3 3v13H1z" {...s2} /><path d="M4 1h7v3H4z" {...f} /><circle cx="9" cy="11" r="3" {...f} /></Ico>],
  ["다른 이름으로 저장", 46, <Ico w={20} h={18}><path d="M16 5l-3-4H1v15h4" {...s2} /><path d="M4 1h7v3H4zM7 9a3 3 0 014-1l-4 4zM8 14l8-8 3 3-8 8-4 1z" {...f} /></Ico>],
  ["내보내기", 44, <Ico w={19} h={18}><path d={DocPath} {...s2} /><path d="M7 8c0 3 2 4 5 4V9l6 6-6 4v-3c-4 0-6-4-5-8z" {...f} /></Ico>],
];

const lanes: [string, React.ReactNode][] = [
  ["오버레이 클립", <Ico w={20} h={15}><path d="M3 0l1 3 3 1-3 0-1 3-1-3-2 0 2-1zM6 7l1 2 2 1-2 0-1 2-1-2-1 0 1-1zM19 2l-6 9-2-2zM10 9l3 3c-1 2-3 3-5 3 1-2 0-5 2-6z" {...f} /></Ico>],
  ["오디오", <Ico w={12} h={14}><path d="M4 12V2l7-1v10" {...s2} /><path d="M4 3h7" {...s2} /><circle cx="3" cy="11" r="2" {...f} /><circle cx="9" cy="11" r="2" {...f} /></Ico>],
  ["텍스트", <Ico w={11} h={12}><path d="M0 0h11v3h-1l-1-2H7v9l1 1v1H3v-1l1-1V1H2L1 3H0z" {...f} /></Ico>],
  ["이미지", <Ico w={13} h={11}><path d="M0 0h13v11H0zM1 1v7l3-3 2 2 3-2 3 3V1z" fillRule="evenodd" {...f} /></Ico>],
];

export default function App() {
  return (
    <Page>
      <Global />
      <TitleBar>
        <Logo>GOM<LogoSub>Mix</LogoSub></Logo>
        <GearBtn aria-label="환경 설정">
          <Ico w={14} h={14}>
            <path d="M7 0v14M0 7h14M2 2l10 10M12 2L2 12" stroke="currentColor" strokeWidth="2" />
            <circle cx="7" cy="7" r="4" fill={c.base} stroke="currentColor" strokeWidth="2" />
          </Ico>
        </GearBtn>
        <ProjectName>새 프로젝트 (이름 없음)</ProjectName>
        <Promo href="#">
          곰믹스로 부족할 땐!
          <Ico w={13} h={10}><path d="M0 4h1v2H0zM2 4h2v2H2zM5 4h3V0l5 5-5 5V6H5z" fill={c.red} /></Ico>
        </Promo>
        <TitleBtn aria-label="도움말">
          <Ico w={8} h={12}><path d="M1 4V2l1-1h4l1 1v3L4 7v2M4 10v2" stroke="currentColor" strokeWidth="2" /></Ico>
        </TitleBtn>
        <BarRule />
        <WindowBtns>
          <TitleBtn aria-label="최소화"><Ico w={10} h={12}><path d="M0 7h9v3H0z" fill="currentColor" /></Ico></TitleBtn>
          <TitleBtn aria-label="이전 크기로"><Ico w={12} h={12}><path d="M3 0h9v7H9V6h2V2H4v1H3zM0 4h8v7H0zm1 3v3h6V7z" fill="currentColor" fillRule="evenodd" /></Ico></TitleBtn>
          <TitleBtn aria-label="닫기"><Ico w={10} h={10}><path d="M1 1l8 8M9 1L1 9" stroke="currentColor" strokeWidth="2" /></Ico></TitleBtn>
        </WindowBtns>
      </TitleBar>

      <Main>
        <Player>
          <Stage><RecordedFrame /></Stage>
          <Controls>
            <Seek>
              <SeekHead><Ico w={13} h={13}><path d="M0 0h11v7l-4 5H5L0 7z" fill={c.red} /><path d="M12 7l-5 5" stroke="#4a1820" /></Ico></SeekHead>
              <SeekTrack><SeekFill /></SeekTrack>
            </Seek>
            <Transport>
              <TimeSpinner label="현재 위치" value="00:00:00.00" wide />
              <PlayBtns>
                <button aria-label="재생"><Ico w={26} h={22}><path d="M11 0l15 11-15 11z" fill={c.track} /></Ico></button>
                <button aria-label="정지"><Ico w={19} h={22}><path d="M0 2h19v19H0z" fill={c.track} /></Ico></button>
              </PlayBtns>
              <Total>0:00:14.14</Total>
            </Transport>
          </Controls>
        </Player>

        <Editor>
          <Tabs>
            <Tab>미디어 소스</Tab>
            <Tab $on>텍스트/이미지</Tab>
            <Tab>템플릿<Pro>Pro</Pro></Tab>
            <Tab>오버레이 클립<Pro>Pro</Pro></Tab>
            <Tab>필터</Tab>
            <Tab>영상 전환</Tab>
          </Tabs>
          <Crumbs>
            <Back><Ico w={8} h={12}><path d="M7 1L2 6l5 5" stroke="currentColor" strokeWidth="2" /></Ico>이전</Back>
            텍스트 추가
          </Crumbs>
          <ToolRow $cols="115fr 53fr 53fr 111fr 111fr 55fr 55fr 55fr 55fr">
            <FontBtn aria-haspopup="listbox" aria-expanded="true">산돌 고딕네...<Caret up /></FontBtn>
            <PickCell><SizePick aria-label="글자 크기" defaultValue="72"><option>72</option></SizePick><Caret /></PickCell>
            <Split aria-label="글자 스타일"><StyleMark>S</StyleMark><Caret /></Split>
            <Trio>
              <Glyph>B</Glyph>
              <Glyph $italic>I</Glyph>
              <Glyph $under>U</Glyph>
            </Trio>
            <Trio>
              <Glyph $on aria-label="왼쪽 정렬"><AlignIcon short={0} /></Glyph>
              <Glyph aria-label="가운데 정렬"><AlignIcon short={3} /></Glyph>
              <Glyph aria-label="오른쪽 정렬"><AlignIcon short={6} /></Glyph>
            </Trio>
            {colorMarks.map((m, i) => (
              <Split key={i} aria-label={["글자 색", "윤곽선 색", "배경 색", "그림자 색"][i]}>{m}<Caret /></Split>
            ))}
          </ToolRow>
          <ToolRow $cols="279fr 279fr 111fr">
            <FxSplit aria-label="나타나기 효과"><Caret /></FxSplit>
            <PickCell>
              <PickLabel htmlFor="fade-out">사라지기</PickLabel>
              <Pick id="fade-out" defaultValue="효과 없음"><option>효과 없음</option></Pick>
              <Caret />
            </PickCell>
            <PosSplit>
              <PosLabel>위치</PosLabel>
              <Ico w={22} h={16}>
                <path d="M0 0h22v16H0zM2 1v4h5V1zM8 1v4h6V1zM15 1v4h6V1zM2 6v4h5V6zM8 6v4h6V6zM15 6v4h6V6zM2 11v4h5v-4zM15 11v4h6v-4z" fill="#c9ccd2" fillRule="evenodd" />
              </Ico>
              <Caret />
            </PosSplit>
          </ToolRow>
          <Pad><TextBox aria-label="텍스트 입력" /></Pad>
          <Timing>
            <Timer>
              <Stopwatch><path d="M9 8v4l-3 3a4 4 0 103-7z" fill="#7e8aa0" /></Stopwatch>
              <TimeSpinner label="지속 시간" value="00:00:03.00" />
            </Timer>
            <Timer>
              <Stopwatch><path d="M7 8l5 4-5 4z" fill={c.red} /></Stopwatch>
              <TimeSpinner label="시작 시간" value="00:00:00.00" />
            </Timer>
            <Timer>
              <Stopwatch><path d="M6 9h6v6H6z" fill="#3b78ff" /></Stopwatch>
              <TimeSpinner label="종료 시간" value="00:00:03.00" />
            </Timer>
            <Actions>
              <ActBtn $main>적용</ActBtn>
              <ActBtn>취소</ActBtn>
            </Actions>
          </Timing>
          <Menu>
            <Options role="listbox" aria-label="글꼴">
              {fonts.map(([name, size, weight], i) => (
                <Option key={name} role="option" aria-selected={i === 11} $size={size} $weight={weight} $on={i === 11}>{name}</Option>
              ))}
            </Options>
            <MenuBar><MenuThumb /></MenuBar>
          </Menu>
          <Highlight>
            <Ico w={366} h={510}><ellipse cx="183" cy="255" rx="178" ry="249" stroke="#f00" strokeWidth="10" /></Ico>
          </Highlight>
        </Editor>
      </Main>

      <Timeline>
        <EditBar>
          <EditSide>
            {leftTools.map((g, i) => (
              <EditGroup key={i}>
                {g.map(([name, w, icon]) => <EditBtn key={name} $w={w} aria-label={name}>{icon}</EditBtn>)}
              </EditGroup>
            ))}
          </EditSide>
          <EditGroup>
            {rightTools.map(([name, w, icon]) => <EditBtn key={name} $w={w} aria-label={name}>{icon}</EditBtn>)}
          </EditGroup>
        </EditBar>
        <Lanes>
          <RulerRow>
            <ZoomBtns>
              <button aria-label="확대"><Ico w={16} h={16}><circle cx="7" cy="7" r="6" {...s2} /><path d="M11 11l4 4M4 7h6M7 4v6" {...s2} /></Ico></button>
              <button aria-label="축소"><Ico w={16} h={16}><circle cx="7" cy="7" r="6" {...s2} /><path d="M11 11l4 4M4 7h6" {...s2} /></Ico></button>
              <button aria-label="전체 보기"><Ico w={16} h={16}><path d="M8 0l4 4H9v2H7V4H4zM8 16l4-4H9v-2H7v2H4zM0 8l4-4v3h2v2H4v3zM16 8l-4-4v3h-2v2h2v3z" {...f} /></Ico></button>
            </ZoomBtns>
            <Ruler>{marks.map((m) => <Mark key={m}>{m}</Mark>)}</Ruler>
          </RulerRow>
          <Lane $tall>
            <LaneHead>
              <Ico w={12} h={11}><path d="M0 0h12v11H0zM4 2v3h4V2zM4 6v3h4V6zM1 1v2h1V1zM1 4v2h1V4zM1 8v2h1V8zM10 1v2h1V1zM10 4v2h1V4zM10 8v2h1V8z" fillRule="evenodd" {...f} /></Ico>
              <LaneName>미디어 소스</LaneName>
              <LaneInfo>1920X1080, MP4</LaneInfo>
            </LaneHead>
            <Clip>
              <Thumb>
                <Ico w={60} h={7}>
                  <path d="M4 4h6M14 4h5M40 3h2" stroke="#b5bfd2" strokeWidth="2" />
                  <path d="M22 4h6" stroke="#4a5670" strokeWidth="2" />
                  <path d="M29 4h3" stroke="#d65a4a" strokeWidth="2" />
                  <path d="M32 4h3" stroke="#5fae6a" strokeWidth="2" />
                  <path d="M35 4h3" stroke="#5b7fd0" strokeWidth="2" />
                </Ico>
              </Thumb>
              <ClipText>
                녹화_2019...
                <Ico w={13} h={10}><path d="M0 3h2l4-3v10L2 7H0z" {...f} /><path d="M8 3l4 4M12 3L8 7" stroke="currentColor" /></Ico>
              </ClipText>
            </Clip>
          </Lane>
          {lanes.map(([name, icon]) => (
            <Lane key={name}><LaneHead>{icon}<LaneName>{name}</LaneName></LaneHead></Lane>
          ))}
          <HScroll>
            <HBtn aria-label="왼쪽으로"><Ico w={4} h={7}><path d="M4 0v7L0 4z" {...f} /></Ico></HBtn>
            <HTrack>
              <HThumb><Ico w={8} h={7}><path d="M0 0h1v7H0zM3 0h1v7H3zM6 0h1v7H6z" fill="#7f8694" /></Ico></HThumb>
            </HTrack>
            <HBtn aria-label="오른쪽으로"><Ico w={4} h={7}><path d="M0 0v7l4-3z" {...f} /></Ico></HBtn>
          </HScroll>
          <Marker $x={137} $color="#ffcc00" $line={4}><Ico w={5} h={16}><path d="M5 0v16H0V4z" {...f} /></Ico></Marker>
          <Marker $x={171} $color="#c4c6ca" $line={0}><Ico w={5} h={16}><path d="M0 0v16h5V4z" {...f} /></Ico></Marker>
        </Lanes>
      </Timeline>

      <Footer>
        저장 폴더
        <SavePath>C:₩Users₩wnsgu₩OneDrive₩바탕 화면₩영상녹화₩</SavePath>
        <FootBtn $w={137}>
          <Ico w={27} h={18}><path d="M1 2h3l1 1h4v6H1zM14 7h4l2 2h6v8H15" {...s2} /><path d="M4 11c0 3 2 4 6 4v-3l5 4-5 4v-3c-4 0-6-2-6-6z" {...f} /></Ico>
          폴더 변경
        </FootBtn>
        <FootBtn $w={135}>
          <Ico w={19} h={16}><path d="M1 1h7l2 3h8v11H1z" {...s2} /></Ico>
          폴더 열기
        </FootBtn>
        <FootBtn $w={134} $last disabled>
          <Ico w={22} h={17}><path d="M1 1h18v4H1zM1 12h11v4H1zM5 1v15M15 5v3M9 1v4M14 1v4M9 12v4" {...s2} /><circle cx="17" cy="12" r="3" {...s2} /><path d="M17 6v11M12 12h10M13 8l8 8M21 8l-8 8" stroke="currentColor" /></Ico>
          출력 설정
        </FootBtn>
        <Encode>인코딩 시작</Encode>
      </Footer>
    </Page>
  );
}
